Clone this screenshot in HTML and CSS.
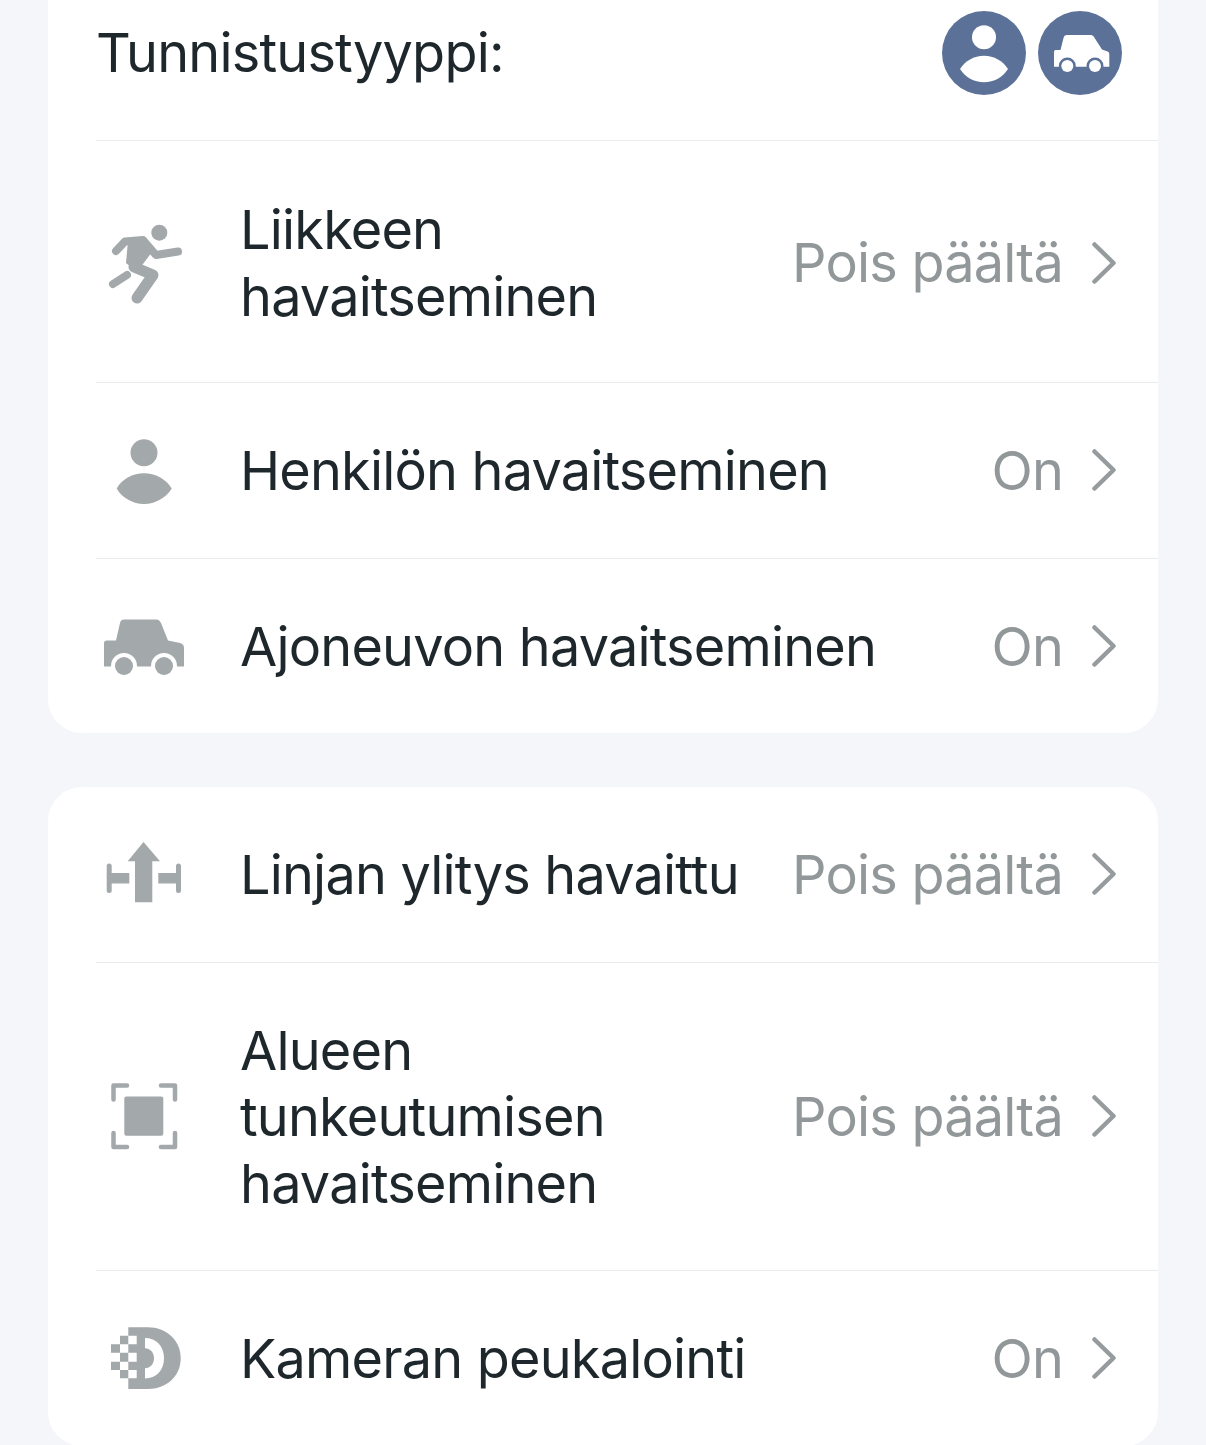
FILE: index.html
```html
<!DOCTYPE html>
<html lang="fi">
<head>
<meta charset="utf-8">
<title>Tunnistustyyppi</title>
<link rel="stylesheet" href="styles.css">
</head>
<body>
<main class="page">
  <section class="card card-top">
    <header class="head">
      <span class="head-title">Tunnistustyyppi:</span>
      <span class="badges">
        <svg class="badge" viewBox="0 0 84 84"><circle cx="42" cy="42" r="42" fill="#5c7197"/><circle cx="42" cy="26.300" r="12" fill="#fff"/><path d="M18 58C23 50 32 44.700 42 44.700S61 50 66 58C61 66 52 71.300 42 71.300S23 66 18 58Z" fill="#fff"/></svg>
        <svg class="badge" viewBox="0 0 84 84"><circle cx="42" cy="42" r="42" fill="#5c7197"/><path d="M16 41C16 39.500 17 39 18 39H22.500L25.500 27C26 25 27 24 29 24H52C54 24 55 24.500 56 26L64 38.500L69.500 40.500C71 41 71.300 42 71.300 43.500V55.700H16Z" fill="#fff"/><circle cx="29.300" cy="55" r="8.500" fill="#5c7197"/><circle cx="57" cy="55" r="8.500" fill="#5c7197"/><circle cx="29.300" cy="55" r="6" fill="#fff"/><circle cx="57" cy="55" r="6" fill="#fff"/></svg>
      </span>
    </header>
    <a class="row row-first">
      <span class="icon"><svg viewBox="0 0 96 96"><circle cx="63.300" cy="17.700" r="8" fill="#a3a8aa"/><path d="M32 26L48 24L56 37L41 57L30 48Z" fill="#a3a8aa"/><path d="M20 36L29 26.500L47 25L60 40L82 36.500" class="ic-line"/><path d="M38 52L57 60L41 83" class="ic-wide"/><path d="M17 69L31 60" class="ic-line"/></svg></span>
      <span class="label">Liikkeen havaitseminen</span>
      <span class="value">Pois päältä</span>
      <svg class="chev" viewBox="0 0 24 42"><path d="M2.500 2.500L21.500 21L2.500 39.500"/></svg>
    </a>
    <a class="row">
      <span class="icon"><svg viewBox="0 0 96 96"><circle cx="48" cy="30.700" r="13.500" fill="#a3a8aa"/><path d="M20.700 66.500C26 57 37 51.300 48 51.300S70 57 75.700 66.500C70 76 59 82 48 82S26 76 20.700 66.500Z" fill="#a3a8aa"/></svg></span>
      <span class="label">Henkilön havaitseminen</span>
      <span class="value">On</span>
      <svg class="chev" viewBox="0 0 24 42"><path d="M2.500 2.500L21.500 21L2.500 39.500"/></svg>
    </a>
    <a class="row">
      <span class="icon"><svg viewBox="0 0 96 96"><path d="M8 45C8 43.500 9 42.500 11 42.500H20L24 25C24.500 22.500 26 21.500 28 21.500H60C62.500 21.500 63.500 22.500 65 25L72 42.500L84 45C87 46 88 47.500 88 50V68.500H8Z" fill="#a3a8aa"/><circle cx="28" cy="68" r="13" fill="#fff"/><circle cx="68" cy="68" r="13" fill="#fff"/><rect x="8" y="69" width="80" height="10" fill="#fff"/><circle cx="28" cy="68" r="9" fill="#a3a8aa"/><circle cx="68" cy="68" r="9" fill="#a3a8aa"/></svg></span>
      <span class="label">Ajoneuvon havaitseminen</span>
      <span class="value">On</span>
      <svg class="chev" viewBox="0 0 24 42"><path d="M2.500 2.500L21.500 21L2.500 39.500"/></svg>
    </a>
  </section>
  <section class="card card-bottom">
    <a class="row">
      <span class="icon"><svg viewBox="0 0 96 96"><path d="M47.500 16L64 35.200H56.300V76.200H39V35.200H31.700Z" fill="#a3a8aa"/><rect x="10.700" y="37.500" width="5" height="29.500" rx="2.500" fill="#a3a8aa"/><rect x="15" y="47" width="18.300" height="10.500" fill="#a3a8aa"/><rect x="80" y="37.500" width="5" height="29.500" rx="2.500" fill="#a3a8aa"/><rect x="62.300" y="47" width="18.300" height="10.500" fill="#a3a8aa"/></svg></span>
      <span class="label">Linjan ylitys havaittu</span>
      <span class="value">Pois päältä</span>
      <svg class="chev" viewBox="0 0 24 42"><path d="M2.500 2.500L21.500 21L2.500 39.500"/></svg>
    </a>
    <a class="row">
      <span class="icon"><svg viewBox="0 0 96 96"><rect x="28.300" y="28.400" width="39" height="39.300" rx="2" fill="#a3a8aa"/><path d="M31 17.500H17.500V31.500M65 17.500H79V31.500M31 79H17.500V65M65 79H79V65" class="ic-corner"/></svg></span>
      <span class="label">Alueen tunkeutumisen havaitseminen</span>
      <span class="value">Pois päältä</span>
      <svg class="chev" viewBox="0 0 24 42"><path d="M2.500 2.500L21.500 21L2.500 39.500"/></svg>
    </a>
    <a class="row">
      <span class="icon"><svg viewBox="0 0 96 96"><path d="M49 17.300H52C70 17.300 84.700 30 84.700 48.300S70 79 52 79H49Z" fill="#a3a8aa"/><path d="M49 28C60 28 68 36 68 48.300S60 68.500 49 68.500Z" fill="#fff"/><path d="M49 38.300C54 38.300 58 42.500 58 48.300S54 58.300 49 58.300Z" fill="#a3a8aa"/><path d="M32.300 17.300H49V25.700H32.300ZM24 25.700H32.300V34.300H24ZM40.700 25.700H49V68.300H40.700ZM15 34.300H24V42.700H15ZM32.300 34.300H40.700V42.700H32.300ZM24 42.700H32.300V51.700H24ZM15 51.700H24V60H15ZM32.300 51.700H40.700V60H32.300ZM24 60H32.300V68.300H24ZM32.300 68.300H49V79H32.300Z" fill="#a3a8aa"/></svg></span>
      <span class="label">Kameran peukalointi</span>
      <span class="value">On</span>
      <svg class="chev" viewBox="0 0 24 42"><path d="M2.500 2.500L21.500 21L2.500 39.500"/></svg>
    </a>
  </section>
</main>
</body>
</html>
```
FILE: styles.css
```css
* { box-sizing: border-box; }
html, body { margin: 0; height: 1445px; overflow: hidden; background: #f5f6fa; }
body { font-family: Inter, "Liberation Sans", sans-serif; color: #1e272c; }
.page { padding: 0 48px; }
.card { background: #fff; border-radius: 34px; }
.card-top { margin-top: -40px; }
.card-bottom { margin-top: 54px; }
.head { display: flex; align-items: flex-start; justify-content: space-between; height: 180px; padding: 51px 36px 0 48px; }
.head-title { font-size: 54px; line-height: 66.500px; letter-spacing: -0.800px; margin-top: 9px; }
.badges { display: flex; gap: 12px; }
.badge { width: 84px; height: 84px; display: block; }
.row { display: flex; align-items: center; margin-left: 48px; padding: 54px 42px 54px 0; border-top: 1px solid #e9ebee; }
.row-first { padding-top: 55px; padding-bottom: 53px; }
.card-bottom .row:first-child { border-top: 0; }
.icon { flex: none; width: 96px; height: 96px; margin: -20px 48px -20px 0; }
.icon svg { display: block; width: 96px; height: 96px; }
.label { flex: 1; font-size: 54px; line-height: 66.500px; letter-spacing: -0.800px; margin-top: 1px; margin-bottom: -1px; }
.value { flex: none; font-size: 54px; line-height: 66.500px; letter-spacing: -0.800px; color: #92979a; margin: 1px 0 -1px 40px; }
.chev { flex: none; width: 24px; height: 42px; margin-left: 29px; fill: none; stroke: #969b9d; stroke-width: 4.500; stroke-linecap: round; stroke-linejoin: round; }
.ic-line { fill: none; stroke: #a3a8aa; stroke-width: 8; stroke-linecap: round; stroke-linejoin: round; }
.ic-wide { fill: none; stroke: #a3a8aa; stroke-width: 11; stroke-linecap: round; stroke-linejoin: round; }
.ic-corner { fill: none; stroke: #a3a8aa; stroke-width: 4.500; stroke-linecap: round; stroke-linejoin: round; }
```
